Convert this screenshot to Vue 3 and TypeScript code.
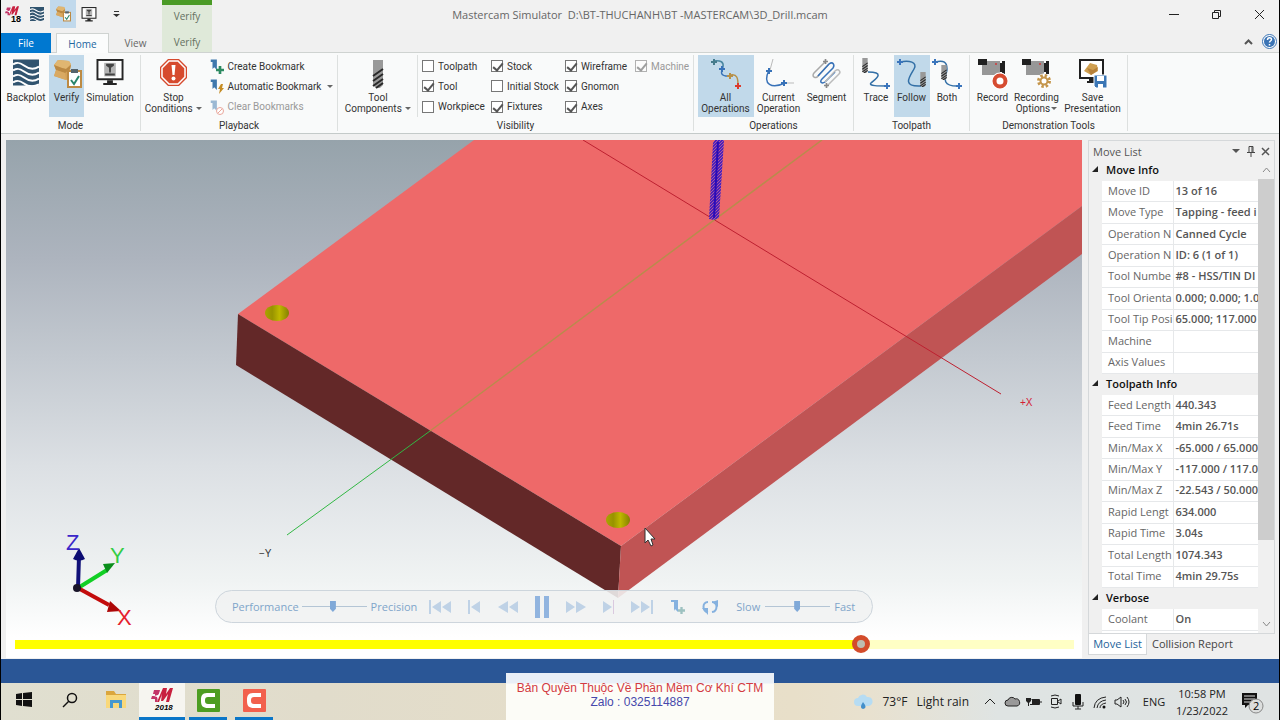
<script setup lang="ts">
import { computed, ref } from 'vue'

interface Check { label: string; on: boolean; disabled?: boolean }
interface Section { title: string; rows: [string, string][]; clipped?: boolean }

const checkColumns = ref<Check[][]>([
  [{ label: 'Toolpath', on: false }, { label: 'Tool', on: true }, { label: 'Workpiece', on: false }],
  [{ label: 'Stock', on: true }, { label: 'Initial Stock', on: false }, { label: 'Fixtures', on: true }],
  [{ label: 'Wireframe', on: true }, { label: 'Gnomon', on: true }, { label: 'Axes', on: true }],
  [{ label: 'Machine', on: true, disabled: true }],
])

const sections: Section[] = [
  {
    title: 'Move Info',
    rows: [
      ['Move ID', '13 of 16'],
      ['Move Type', 'Tapping - feed i'],
      ['Operation N', 'Canned Cycle'],
      ['Operation N', 'ID: 6 (1 of 1)'],
      ['Tool Numbe', '#8 - HSS/TIN DI'],
      ['Tool Orienta', '0.000; 0.000; 1.0'],
      ['Tool Tip Posi', '65.000; 117.000'],
      ['Machine', ''],
      ['Axis Values', ''],
    ],
  },
  {
    title: 'Toolpath Info',
    rows: [
      ['Feed Length', '440.343'],
      ['Feed Time', '4min 26.71s'],
      ['Min/Max X', '-65.000 / 65.000'],
      ['Min/Max Y', '-117.000 / 117.0'],
      ['Min/Max Z', '-22.543 / 50.000'],
      ['Rapid Lengt', '634.000'],
      ['Rapid Time', '3.04s'],
      ['Total Length', '1074.343'],
      ['Total Time', '4min 29.75s'],
    ],
  },
  { title: 'Verbose', clipped: true, rows: [['Coolant', 'On']] },
]

const quality = ref(48)
const speed = ref(49)
const progress = ref(804)
const progressFill = computed(() => `${progress.value / 10}%`)
</script>

<template>
  <div class="screen">
    <svg class="defs" aria-hidden="true">
      <symbol id="waves" viewBox="0 0 26 26">
        <rect width="26" height="26" fill="#31546f" />
        <g fill="none" stroke="#fff" stroke-width="2">
          <path d="M0 5c4-3 7-2 11 1s9 5 15 1" />
          <path d="M0 11c4-3 7-2 11 1s9 5 15 1" />
          <path d="M0 17c4-3 7-2 11 1s9 5 15 1" />
          <path d="M0 23c4-3 7-2 11 1s9 4 15 1" />
        </g>
      </symbol>
      <symbol id="verify" viewBox="0 0 30 30">
        <path d="M2 6l4-5 11 1 2 4-1 5 2 2v6l-6 2L2 17l2-6z" fill="#d3a158" />
        <path d="M2 6l4-5 11 1 2 3-5 5-4-1z" fill="#e0b671" />
        <path d="M2 6l8 3 4 1 5-4-1 4-5 4-9-3z" fill="#bb8943" />
        <path d="M2 17l2-6 9 3 1 7z" fill="#d9a962" />
        <rect x="16" y="12" width="13" height="16" fill="#fff" stroke="#bd8a43" stroke-width="2" />
        <path d="M19 10h7v4h-7z" fill="#56646c" />
        <path d="M19 21l3 4 5-8" fill="none" stroke="#28856b" stroke-width="2" />
      </symbol>
      <symbol id="monitor" viewBox="0 0 30 28">
        <rect x="2" y="1" width="26" height="20" fill="#fff" stroke="#252525" stroke-width="2" />
        <path d="M12 22h6v3h4v2H8v-2h4z" fill="#252525" />
        <rect x="9" y="4" width="12" height="14" fill="#b5b5b5" />
        <path d="M11 5h8v2l-3 2v4l-1 2-1-2V9l-3-2zM10 15h10v2H10z" fill="#444" />
      </symbol>
      <symbol id="bookmark" viewBox="0 0 16 16">
        <path d="M2 1h7v12L6 10 4 12V4H2z" fill="#3f78ad" />
      </symbol>
      <symbol id="plus" viewBox="0 0 6 6">
        <path d="M3 0v6M0 3h6" stroke="currentColor" stroke-width="2" />
      </symbol>
      <symbol id="cutter" viewBox="0 0 12 28">
        <path d="M1 0h10v25l-3 3H4l-3-3z" fill="#999" />
        <path d="M1 16l10-7M1 21l10-7M1 26l10-7M4 28l7-5" stroke="#292929" stroke-width="2" />
      </symbol>
      <symbol id="camera" viewBox="0 0 28 28">
        <path d="M0 0h9v6H0z" fill="#202020" />
        <path d="M4 2h18v14H4z" fill="#979797" />
        <path d="M0 0h9v6H0z" fill="#202020" />
        <path d="M22 4h2V2h3v13h-3v-2h-2z" fill="#202020" />
        <circle cx="18" cy="5" r="1" fill="#d03838" />
      </symbol>
      <symbol id="mastercam" viewBox="0 0 22 15">
        <path d="M3 2h6L8 6l3 2-4 2-1 4H4v-3H0l1-3h3V6H2z" fill="#c23468" />
        <path d="M3 8l4-1 2-3v3l2 1-3 1-1 3-1-3z" fill="#fff" />
        <path d="M12 0h4l-1 6 4-6h3l-4 14h-3l2-8-5 7h-2l1-7-3 8H6z" fill="#c8203f" />
      </symbol>
    </svg>

    <header class="titlebar">
      <div class="title-left">
        <span class="app-mark"><svg viewBox="0 0 16 18"><use href="#mastercam" x="0" y="0" width="14" height="10" /><text x="6" y="16" class="mark-text">18</text></svg></span>
        <button class="quick" aria-label="Backplot"><svg width="14" height="14"><use href="#waves" /></svg></button>
        <button class="quick quick-on" aria-label="Verify"><svg width="16" height="16"><use href="#verify" /></svg></button>
        <button class="quick" aria-label="Simulation"><svg width="16" height="15"><use href="#monitor" /></svg></button>
        <button class="quick quick-more" aria-label="Customize"><svg width="7" height="6" viewBox="0 0 7 6"><path d="M1 0h5v1H1zM0 3h7L3.500 6z" fill="#333" /></svg></button>
        <span class="context-title">Verify</span>
      </div>
      <h1>Mastercam Simulator&nbsp; D:\BT-THUCHANH\BT -MASTERCAM\3D_Drill.mcam</h1>
      <div class="window-controls">
        <button aria-label="Minimize"><svg width="10" height="10"><path d="M0 5.500h10" /></svg></button>
        <button aria-label="Restore"><svg width="11" height="11"><path d="M1.500 3.500h6v6h-6zM3.500 3V1.500h6v6H8" /></svg></button>
        <button aria-label="Close"><svg width="11" height="11"><path d="M1 1l9 9M10 1l-9 9" /></svg></button>
      </div>
    </header>

    <nav class="tabs">
      <button class="tab file">File</button>
      <button class="tab home">Home</button>
      <button class="tab view">View</button>
      <button class="tab context">Verify</button>
      <span class="spacer"></span>
      <button class="help" aria-label="Collapse ribbon"><svg width="9" height="6"><path d="M1 5l3.500-3.500L8 5" fill="none" stroke="#555" stroke-width="2" /></svg></button>
      <button class="help" aria-label="Help">
        <svg width="15" height="15" viewBox="0 0 15 15"><circle cx="7.500" cy="7.500" r="7" fill="#fff" stroke="#3b74b5" /><circle cx="7.500" cy="7.500" r="5.500" fill="#3b74b5" /><path d="M5.500 6c0-3 4-3 4-.5 0 1.500-2 1.500-2 3M7.500 10v1.500" fill="none" stroke="#fff" stroke-width="1.500" /></svg>
      </button>
    </nav>

    <div class="ribbon">
      <section class="group mode">
        <div class="tools">
          <button class="big w46"><svg width="26" height="26"><use href="#waves" /></svg><span>Backplot</span></button>
          <button class="big w35 on"><svg width="30" height="30"><use href="#verify" /></svg><span>Verify</span></button>
          <button class="big w52"><svg width="30" height="28"><use href="#monitor" /></svg><span>Simulation</span></button>
        </div>
        <h2>Mode</h2>
      </section>

      <section class="group playback">
        <div class="tools">
          <button class="big w60">
            <svg width="27" height="27" viewBox="0 0 27 27">
              <path d="M8 0h11l8 8v11l-8 8H8l-8-8V8z" fill="#d64a2e" />
              <path d="M9 2h9l7 7v9l-7 7H9l-7-7V9z" fill="none" stroke="#fff" stroke-width="1.500" />
              <path d="M11.500 6h4l-1 10h-2z" fill="#fff" /><circle cx="13.500" cy="19.500" r="2" fill="#fff" />
            </svg>
            <span>Stop<br />Conditions <i class="caret"></i></span>
          </button>
          <div class="small-list">
            <button class="small"><svg width="16" height="16"><use href="#bookmark" width="14" height="15" /><use href="#plus" x="7" y="8" width="8" height="8" color="#2d8a61" /></svg>Create Bookmark</button>
            <button class="small"><svg width="16" height="16"><use href="#bookmark" width="14" height="15" /><path d="M12 6l-3 5h2l-1 5 5-6h-2l1-4z" fill="#c58c24" /></svg>Automatic Bookmark <i class="caret push"></i></button>
            <button class="small" disabled><svg width="16" height="16"><g opacity=".5"><use href="#bookmark" width="14" height="15" /></g><circle cx="11" cy="12" r="3.500" fill="#fff" stroke="#e9a79c" /><path d="M9 14l4-4" stroke="#e9a79c" /></svg>Clear Bookmarks</button>
          </div>
        </div>
        <h2>Playback</h2>
      </section>

      <section class="group visibility">
        <div class="tools">
          <button class="big w66"><svg width="12" height="28"><use href="#cutter" /></svg><span>Tool<br />Components <i class="caret"></i></span></button>
          <div class="checks">
            <div v-for="(column, i) in checkColumns" :key="i" class="check-column">
              <label v-for="item in column" :key="item.label" :class="{ dim: item.disabled }">
                <input v-model="item.on" type="checkbox" :disabled="item.disabled" />{{ item.label }}
              </label>
            </div>
          </div>
        </div>
        <h2>Visibility</h2>
      </section>

      <section class="group operations">
        <div class="tools">
          <button class="big w56 on">
            <svg width="30" height="30" viewBox="0 0 30 30">
              <g fill="none" stroke-width="1.500"><path d="M2 2c8-1 11 1 10 6" stroke="#4a87a0" /><path d="M12 8c-2 5-4 10 8 9" stroke="#3872b8" /><path d="M20 16c6-1 7 3 7 10" stroke="#b79048" /></g>
              <use href="#plus" width="6" height="6" y="0" color="#457b8c" /><use href="#plus" x="8" y="7" width="6" height="6" color="#3872b8" /><use href="#plus" x="16" y="14" width="6" height="6" color="#b79048" /><use href="#plus" x="24" y="24" width="6" height="6" color="#db3b2d" />
            </svg><span>All<br />Operations</span>
          </button>
          <button class="big w50">
            <svg width="30" height="30" viewBox="0 0 30 30">
              <path d="M9 0L6 11M20 24h10" stroke="#bbb" /><path d="M5 11C-2 26 8 30 21 24" fill="none" stroke="#3872b8" stroke-width="1.500" />
              <use href="#plus" x="2" y="9" width="6" height="6" color="#3872b8" /><use href="#plus" x="17" y="21" width="6" height="6" color="#3872b8" />
            </svg><span>Current<br />Operation</span>
          </button>
          <button class="big w46">
            <svg width="30" height="30" viewBox="0 0 30 30">
              <g fill="none" stroke-width="1.500"><path d="M13 3L2 14c-3 4 2 6 4 3L17 5" stroke="#aaa" /><path d="M6 17L17 5c4-3 6 1 4 4L10 20c-3 3 0 5 3 3L23 13" stroke="#3872b8" /><path d="M13 23l10-11c4-3 6 1 4 3L15 27" stroke="#bbb" /></g>
              <use href="#plus" x="11" y="0" width="5" height="5" color="#888" /><use href="#plus" x="12" y="24" width="5" height="5" color="#888" />
            </svg><span>Segment</span>
          </button>
        </div>
        <h2>Operations</h2>
      </section>

      <section class="group toolpath">
        <div class="tools">
          <button class="big w35">
            <svg width="30" height="30" viewBox="0 0 30 30"><use href="#cutter" x="0" y="-1" width="8" height="15" /><path d="M7 13c19 0 6 8 3 11s8 3 16 3" fill="none" stroke="#326fa6" stroke-width="1.500" /><use href="#plus" x="23" y="24" width="6" height="6" color="#3b75bc" /></svg><span>Trace</span>
          </button>
          <button class="big w36 on">
            <svg width="30" height="30" viewBox="0 0 30 30"><path d="M3 3c9-2 18 0 14 7S4 28 24 27" fill="none" stroke="#326fa6" stroke-width="1.500" /><use href="#plus" x="0" y="0" width="6" height="6" color="#3b75bc" /><use href="#cutter" x="22" y="13" width="8" height="15" /></svg><span>Follow</span>
          </button>
          <button class="big w35">
            <svg width="30" height="30" viewBox="0 0 30 30"><path d="M3 3c9-2 12 0 12 7 0 6-8 17 10 17" fill="none" stroke="#326fa6" stroke-width="1.500" /><use href="#plus" x="0" y="0" width="6" height="6" color="#3b75bc" /><use href="#cutter" x="8" y="6" width="8" height="15" /><use href="#plus" x="24" y="24" width="6" height="6" color="#3b75bc" /></svg><span>Both</span>
          </button>
        </div>
        <h2>Toolpath</h2>
      </section>

      <section class="group demo">
        <div class="tools">
          <button class="big w36">
            <svg width="30" height="30" viewBox="0 0 30 30"><use href="#camera" width="28" height="28" /><circle cx="22" cy="22" r="8.500" fill="#fff" /><circle cx="22" cy="22" r="5.500" fill="#fff" stroke="#d64c31" stroke-width="4" /></svg><span>Record</span>
          </button>
          <button class="big w52">
            <svg width="30" height="30" viewBox="0 0 30 30"><use href="#camera" width="28" height="28" /><circle cx="22" cy="22" r="7.500" fill="#fff" /><circle cx="22" cy="22" r="5.500" fill="none" stroke="#c4954b" stroke-width="3" stroke-dasharray="2.400 1.920" /><circle cx="22" cy="22" r="3.500" fill="#fff" stroke="#c4954b" stroke-width="2" /></svg><span>Recording<br />Options<i class="caret"></i></span>
          </button>
          <button class="big w60">
            <svg width="30" height="30" viewBox="0 0 30 30">
              <rect x="2" y="1" width="23" height="18" fill="#fff" stroke="#202020" stroke-width="2" /><path d="M11 20h5v4H9v-2h2z" fill="#202020" />
              <path d="M6 12l6-8 7 2 1 6-7 4z" fill="#cf9f50" /><path d="M9 9l6 2 5-3-1 4-6 4z" fill="#b78139" />
              <path d="M16 16h13v13H18l-2-2z" fill="#3b76b5" stroke="#fff" /><path d="M19 17h7v5h-7zM20 25h5v4h-5z" fill="#fff" />
            </svg><span>Save<br />Presentation</span>
          </button>
        </div>
        <h2>Demonstration Tools</h2>
      </section>
    </div>

    <main class="workspace">
      <div class="viewport">
        <svg class="scene" viewBox="6 140 1076 518" preserveAspectRatio="xMidYMid slice" role="img" aria-label="Stock model">
          <defs>
            <linearGradient id="hole"><stop offset="0" stop-color="#aaa400" /><stop offset=".3" stop-color="#989300" /><stop offset=".6" stop-color="#beb800" /><stop offset="1" stop-color="#858000" /></linearGradient>
            <pattern id="thread" width="3" height="3" patternUnits="userSpaceOnUse"><rect width="3" height="3" fill="#4a22bb" /><path d="M0 3l3-3" stroke="#ab55a0" stroke-width="1" /></pattern>
          </defs>
          <path d="M238 314L474 140h608v66L621 546z" fill="#ee6969" />
          <path d="M238 314l383 232-3 52-382-233z" fill="#632828" />
          <path d="M621 546l461-340v48L618 598z" fill="#c05454" />
          <path d="M583 140l418 254" stroke="#bd2030" />
          <path d="M822 140L430 431" stroke="#b98b4c" stroke-width="1.500" />
          <path d="M430 431L287 535" stroke="#32b744" />
          <path d="M713 143l2-3h9l-5 78-5 2-5-1z" fill="url(#thread)" />
          <path d="M718 142l-4 76" stroke="#2a0bb7" stroke-width="2" />
          <ellipse cx="277" cy="313" rx="12" ry="8" fill="url(#hole)" />
          <ellipse cx="618" cy="520" rx="12" ry="8" fill="url(#hole)" />
          <text x="1020" y="406" class="axis-label" fill="#d41d34">+X</text>
          <text x="259" y="557" class="axis-label" fill="#333">−Y</text>
          <g stroke-width="4">
            <path d="M78 588l29-18" stroke="#12cf25" /><path d="M103 564l12-1-8 10z" fill="#0a8e1b" />
            <path d="M78 588l31 17" stroke="#c30c0c" /><path d="M110 601l11 10-14 1z" fill="#ad0808" />
            <path d="M78 588l1-32" stroke="#101078" /><path d="M73 559l6-11 6 11q-6 3-12 0z" fill="#0c0c73" />
          </g>
          <circle cx="77" cy="588" r="4" fill="#181428" />
          <text x="66" y="550" class="gnomon" fill="#3b27c9">Z</text>
          <text x="110" y="563" class="gnomon" fill="#34cd45">Y</text>
          <text x="117" y="625" class="gnomon" fill="#e5202c">X</text>
          <path d="M645 528v15l3-3 3 6 2-1-2-6h4z" fill="#fff" stroke="#333" />
        </svg>

        <div class="player">
          <label for="quality">Performance</label>
          <input id="quality" v-model="quality" class="mini" type="range" />
          <span class="precision">Precision</span>
          <button class="p34" aria-label="First"><svg width="24" height="14"><path d="M1 0h2v14H1zM13 1v12L4 7zM23 1v12l-9-6z" /></svg></button>
          <button class="p34" aria-label="Step back"><svg width="13" height="14"><path d="M0 0h2v14H0zM12 1v12L3 7z" /></svg></button>
          <button class="p34" aria-label="Rewind"><svg width="20" height="14"><path d="M10 1v12L0 7zM20 1v12l-9-6z" /></svg></button>
          <button class="p34 pause" aria-label="Pause"><svg width="14" height="22"><path d="M0 0h5v22H0zM9 0h5v22H9z" /></svg></button>
          <button class="p34" aria-label="Fast forward"><svg width="20" height="14"><path d="M0 1v12l9-6zM10 1v12l10-6z" /></svg></button>
          <button class="p30" aria-label="Step forward"><svg width="13" height="14"><path d="M1 1v12l9-6z" /><path d="M11 0h1v14h-1z" fill="#dac9df" /></svg></button>
          <button class="p38" aria-label="Last"><svg width="24" height="14"><path d="M1 1v12l9-6zM11 1v12l9-6zM21 0h2v14h-2z" /></svg></button>
          <button class="p34" aria-label="Bookmark"><svg width="16" height="16"><path d="M1 1h7v12l-3-3-1 2V3H1z" fill="#85b1df" /><use href="#plus" x="8" y="8" width="7" height="7" color="#9dc1c0" /></svg></button>
          <button class="p30" aria-label="Loop"><svg width="16" height="16"><path d="M6 13C0 12 0 3 6 3M10 3c6 0 6 9 0 10" fill="none" stroke="#85b1df" stroke-width="2" /><path d="M16 1v7l-6-5zM0 9l6 0 0 7z" fill="#85b1df" /></svg></button>
          <label for="speed" class="slow">Slow</label>
          <input id="speed" v-model="speed" class="mini" type="range" />
          <span>Fast</span>
        </div>
        <input v-model="progress" class="timeline" type="range" min="0" max="1000" aria-label="Progress" :style="{ '--fill': progressFill }" />
      </div>

      <aside class="panel">
        <div class="panel-box">
          <div class="panel-head">
            <h2>Move List</h2>
            <button aria-label="Menu"><i class="caret wide"></i></button>
            <button aria-label="Pin"><svg width="8" height="11"><path d="M2 .5h4v6H2zM5 1v5M0 6.500h8M4 7v4" fill="none" stroke="#444" /></svg></button>
            <button aria-label="Close"><svg width="9" height="9"><path d="M1 1l7 7M8 1L1 8" stroke="#555" stroke-width="1.500" /></svg></button>
          </div>
          <div class="panel-body">
            <div class="sections">
              <section v-for="s in sections" :key="s.title">
                <h3><svg width="7" height="7"><path d="M6 0v6H0z" fill="#222" /></svg>{{ s.title }}</h3>
                <table :class="{ short: s.clipped }">
                  <tbody>
                    <tr v-for="(r, i) in s.rows" :key="i"><th scope="row">{{ r[0] }}</th><td>{{ r[1] }}</td></tr>
                  </tbody>
                </table>
              </section>
              <div class="rest"></div>
            </div>
            <div class="scroll">
              <button aria-label="Scroll up"><svg width="9" height="6"><path d="M1 5l3.500-4L8 5" /></svg></button>
              <div class="track"><div class="thumb"></div></div>
              <button aria-label="Scroll down"><svg width="9" height="6"><path d="M1 1l3.500 4L8 1" /></svg></button>
            </div>
          </div>
        </div>
        <div class="panel-tabs"><button class="active">Move List</button><button>Collision Report</button></div>
      </aside>
    </main>

    <div class="statusbar"></div>

    <footer class="taskbar">
      <button class="task" aria-label="Start"><svg width="16" height="16"><path d="M0 2l6-1v6H0zM7 1l9-1v7H7zM0 8h6v6l-6-1zM7 8h9v7l-9-1z" fill="#111" /></svg></button>
      <button class="task" aria-label="Search"><svg width="16" height="16"><path d="M7 9l-6 6" stroke="#111" stroke-width="1.500" /><circle cx="10" cy="6" r="4.500" fill="none" stroke="#111" stroke-width="1.500" /></svg></button>
      <button class="task" aria-label="File Explorer"><svg width="20" height="18"><path d="M0 0h8l2 3h10v14H0z" fill="#dba63d" /><path d="M0 4h20v13H0z" fill="#f9d87a" /><path d="M4 17V9h12v8h-3v-5H7v5z" fill="#4598d0" /></svg></button>
      <button class="task current" aria-label="Mastercam 2018"><svg width="22" height="24"><use href="#mastercam" width="22" height="15" /><text x="4" y="22" class="year">2018</text></svg></button>
      <button class="task running" aria-label="Camtasia"><svg width="23" height="23"><rect width="23" height="23" rx="1" fill="#4d9d22" /><path d="M18 4h-8c-5 0-6 3-6 7v1c0 5 2 7 7 7h7v-4h-7c-2 0-3-1-3-3v-1c0-2 1-3 3-3h7z" fill="#fff" /></svg></button>
      <button class="task running" aria-label="Camtasia Recorder"><svg width="23" height="23"><rect width="23" height="23" rx="1" fill="#f2604d" /><path d="M18 4h-8c-5 0-6 3-6 7v1c0 5 2 7 7 7h7v-4h-7c-2 0-3-1-3-3v-1c0-2 1-3 3-3h7z" fill="#fff" /></svg></button>
      <span class="spacer"></span>
      <button class="weather"><svg width="20" height="16"><path d="M5 12a4 4 0 0 1 0-8 5 5 0 0 1 9-1 4 4 0 0 1 2 9z" fill="#b6dcf3" /><path d="M10 8q5 6 0 7-4-1 0-7z" fill="#438fca" /></svg><span>73°F</span><span>Light rain</span></button>
      <div class="tray">
        <button aria-label="Hidden icons"><svg width="12" height="8"><path d="M1 6l5-5 5 5" /></svg></button>
        <button class="cloud" aria-label="OneDrive"><svg width="16" height="12"><path d="M4 10a3 3 0 0 1 0-6 4 4 0 0 1 7-1 3.500 3.500 0 0 1 2 7z" /></svg></button>
        <button aria-label="Battery"><svg width="16" height="12"><path d="M5.500 3.500h8v5H4M15 5v2" /><path class="solid" d="M6 4h7v4H6zM0 2h5v3L3 7v3H2V7L0 5z" /></svg></button>
        <button aria-label="Meet now"><svg width="12" height="15"><path d="M1.500 4.500h6v6h-6zM8 7l3-2v5L8 8M1 2q4-2 8 0M1 13q4 2 8 0" /></svg></button>
        <button aria-label="Microphone"><svg width="12" height="16"><rect x="3" y="0" width="6" height="11" rx="1" fill="#111" /><path d="M1 8v4h10V8M6 12v3M3 15h6" /></svg></button>
        <button aria-label="Network"><svg width="14" height="14"><path d="M1 13Q2 3 13 2M4 13q1-7 9-8M7 13q0-4 6-5" /><circle cx="11" cy="12" r="1.500" fill="#111" /></svg></button>
        <button aria-label="Volume"><svg width="16" height="12"><path d="M1 4h2l4-3v10L3 8H1zM9 4q2 2 0 4M11 3q3 3 0 6" /><path d="M13 1q4 5 0 10" /></svg></button>
      </div>
      <button class="lang">ENG</button>
      <button class="clock"><span>10:58 PM</span><span>1/23/2022</span></button>
      <button class="notify" aria-label="2 notifications"><svg width="26" height="26"><path d="M1 4h15v12H7l-3 3v-3H1z" fill="#111" /><path d="M3 7h11M3 10h11M3 13h7" stroke="#ddd" /><circle cx="15" cy="17" r="7" fill="#dcdedd" stroke="#888" /><text x="12" y="21" class="count">2</text></svg></button>
    </footer>

    <div class="credit"><strong>Bản Quyền Thuộc Về Phần Mềm Cơ Khí CTM</strong><span>Zalo : 0325114887</span></div>
  </div>
</template>

<style>
body { background: #000; }
</style>

<style scoped>
.screen { position: relative; box-sizing: border-box; display: flex; flex-direction: column; height: 100vh; overflow: hidden; border: solid #000; border-width: 0 1px; background: #f0f0f0; color: #333; font: 10px/11px "Open Sans", "Noto Sans", sans-serif; }
.screen * { box-sizing: border-box; }
.defs { position: absolute; width: 0; height: 0; }
svg { display: block; flex: none; overflow: visible; }
button { padding: 0; border: 0; background: none; color: inherit; font: inherit; }
h1, h2, h3 { margin: 0; font: inherit; }
.spacer { flex: 1; }
.caret { display: inline-block; margin-left: 1px; border: solid transparent; border-width: 3px 3px 0; border-top-color: #666; vertical-align: 2px; }
.caret.push { margin-left: 3px; }
.caret.wide { border-width: 4px 4px 0; border-top-color: #555; }

.titlebar { display: grid; grid-template-columns: 1fr auto 1fr; height: 30px; background: #f1f1f1; }
.title-left { display: flex; }
.app-mark { width: 23px; padding: 6px 0 0 4px; }
.app-mark svg { width: 16px; height: 18px; }
.mark-text { font: bold 9px "Liberation Sans", sans-serif; }
.quick { display: grid; place-items: center; width: 26px; height: 28px; }
.quick-on { background: #c1d9ec; }
.quick-more { width: 29px; }
.context-title { width: 50px; margin-left: 31px; padding-top: 6px; border-top: 5px solid #4a9b25; background: #dfe9d9; color: #64705f; text-align: center; }
h1 { color: #666; font-size: 11px; line-height: 29px; }
.window-controls { display: flex; justify-content: flex-end; margin-right: -2px; }
.window-controls button { display: grid; place-items: center; width: 43px; height: 28px; }
.window-controls path { fill: none; stroke: #222; }

.tabs { display: flex; height: 23px; border-bottom: 1px solid #cfd3d1; }
.tab { height: 20px; margin-top: 3px; color: #666; text-align: center; }
.file { width: 50px; background: #0078d0; color: #fff; }
.home { width: 53px; height: 21px; margin-left: 5px; border: 1px solid #cfd3d1; border-bottom: 0; background: #fbfcfc; color: #23669f; }
.view { width: 53px; }
.context { width: 50px; height: 22px; margin-top: 0; padding-top: 3px; background: #dfe9d9; color: #64705f; }
.help { display: grid; place-items: center; width: 21px; padding-top: 1px; }
.tabs .help:last-child { margin-right: -1px; }

.ribbon { display: flex; height: 81px; padding-top: 2px; border-bottom: 1px solid #c4cac9; background: #f9fafa; font-family: Roboto, "Open Sans", sans-serif; }
.group { height: 76px; border-right: 1px solid #dde0df; }
.group h2 { line-height: 18px; text-align: center; }
.tools { display: flex; justify-content: center; height: 62px; }
.mode { width: 140px; }
.mode .tools { justify-content: flex-start; padding-left: 2px; }
.playback { width: 197px; }
.visibility { width: 356px; }
.operations { width: 160px; }
.toolpath { width: 116px; }
.demo { width: 158px; }
.big { display: flex; flex-direction: column; align-items: center; height: 62px; padding-top: 4px; white-space: nowrap; }
.big svg { height: 30px; overflow: visible; }
.mode .big:first-child svg, .mode .big:last-child svg, .playback .big svg { height: 27px; margin-bottom: 3px; }
.big span { margin-top: 3px; }
.on { background: #c1d9ea; }
.w35 { width: 35px; } .w36 { width: 36px; } .w46 { width: 46px; } .w50 { width: 50px; } .w52 { width: 52px; } .w56 { width: 56px; } .w60 { width: 60px; } .w66 { width: 66px; }
.small-list, .check-column { display: grid; grid-template-rows: repeat(3, 1fr); padding-top: 1px; }
.small { display: flex; align-items: center; gap: 3px; text-align: left; white-space: nowrap; }
.small-list { width: 126px; margin-left: 5px; }
.small:disabled, .dim { color: #999; }
.checks { display: grid; grid-template-columns: 69px 74px 70px 58px; margin-left: 6px; padding-left: 4px; border-left: 1px solid #dde0df; }
.visibility .tools { justify-content: flex-start; padding-left: 7px; }
label { display: flex; align-items: center; white-space: nowrap; }
input[type='checkbox'] { appearance: none; position: relative; width: 12px; height: 12px; margin: 0 4px 0 0; border: 1px solid #777; background: #fff; }
input[type='checkbox']:checked::after { content: ''; position: absolute; left: 3px; top: 0; width: 4px; height: 8px; border: solid #555; border-width: 0 2px 2px 0; transform: rotate(40deg); }
.dim input { opacity: .55; }

.workspace { display: flex; flex: 1; min-height: 0; padding: 6px 4px 0 5px; }
.viewport { position: relative; flex: 1; min-width: 0; overflow: hidden; background: linear-gradient(#96a3ab, #adb4be 23%, #c3c9d0 42%, #dce0e4 63%, #f0f3f3 85%, #fff 96%); }
.scene { position: absolute; width: 100%; height: 100%; }
.axis-label { font: 10px "Liberation Sans", sans-serif; }
.gnomon { font: 22px "Liberation Sans", sans-serif; }
.player { position: absolute; bottom: 35px; left: 50%; display: flex; align-items: center; width: 658px; height: 33px; padding: 0 16px; border: 1px solid #cdd5dc; border-radius: 17px; background: rgb(240 241 241 / 88%); color: #7fa5ca; font-size: 11px; transform: translateX(-50%); }
.player button { display: grid; place-items: center; }
.player svg { fill: #bfd2e6; }
.precision { margin-right: 6px; }
.mini { appearance: none; width: 65px; height: 14px; margin: 0 4px 0 3px; background: linear-gradient(#b4c5d5, #b4c5d5) center / 100% 1px no-repeat; }
.mini::-webkit-slider-thumb { appearance: none; width: 6px; height: 11px; background: #80a9d8; clip-path: polygon(0 0, 100% 0, 100% 70%, 50% 100%, 0 70%); }
.p30 { width: 30px; } .p34 { width: 34px; } .p38 { width: 38px; }
.pause svg { fill: #91b4df; }
.slow { margin: 0 2px 0 11px; }
.timeline { appearance: none; position: absolute; right: 8px; bottom: 5px; left: 9px; height: 18px; margin: 0; background: linear-gradient(90deg, #ff0 var(--fill), #ffffc5 var(--fill)) center / 100% 9px no-repeat; }
.timeline::-webkit-slider-thumb { appearance: none; width: 18px; height: 18px; border: 5px solid #d34c2b; border-radius: 50%; background: #bdbdb0; }

.panel { display: flex; flex-direction: column; width: 187px; margin-left: 6px; padding-bottom: 3px; font-size: 11px; }
.panel-box { display: flex; flex: 1; flex-direction: column; min-height: 0; border: 1px solid #d5d8da; }
.panel-head { display: flex; align-items: center; height: 19px; padding: 0 1px 0 4px; line-height: 19px; }
.panel-head h2 { flex: 1; padding-top: 2px; color: #555; }
.panel-head button { display: grid; place-items: center; width: 15px; height: 20px; padding-top: 1px; }
.panel-body { display: flex; flex: 1; min-height: 0; }
.sections { display: flex; flex: 1; flex-direction: column; min-width: 0; overflow: hidden; }
h3 { display: flex; align-items: center; gap: 7px; height: 21px; padding: 0 0 2px 3px; color: #111; font-weight: 600; }
table { width: calc(100% - 13px); height: 193px; margin-left: 13px; border-collapse: collapse; table-layout: fixed; background: #fff; }
table.short { height: 22px; }
.rest { flex: 1; margin-left: 13px; background: #fff; }
th, td { padding: 0 0 2px 6px; overflow: hidden; border-bottom: 1px solid #e6e8ea; color: #666; line-height: 15px; text-align: left; white-space: nowrap; }
th { width: 71px; border-right: 1px solid #e6e8ea; font-weight: 400; }
td { padding-left: 2px; color: #555; font-weight: 600; }
.scroll { display: flex; flex-direction: column; width: 16px; }
.scroll button { display: grid; place-items: center; height: 19px; }
.scroll path { fill: none; stroke: #888; }
.track { flex: 1; }
.thumb { height: 83%; background: #cdcdcd; }
.panel-tabs { display: flex; height: 21px; }
.panel-tabs button { padding: 0 5px 3px; color: #444; white-space: nowrap; }
.panel-tabs .active { width: 59px; padding: 0 0 2px; border: solid #d5d8da; border-width: 0 1px 1px; background: #fff; color: #24639b; }

.statusbar { height: 24px; margin-top: 1px; background: #2a5696; }
.taskbar { display: flex; align-items: center; height: 37px; background: linear-gradient(90deg, #e0dfd0, #e1dccb 25%, #e8dfc9 62%, #e8e1cf 68%, #dfe4e3 78%, #dfe3e3); color: #222; font-size: 12px; }
.task { display: grid; place-items: center; width: 46px; height: 37px; border-bottom: 3px solid transparent; }
.task.current { background: #f6f5f0; }
.task.current, .task.running { border-color: #0b76c8; }
.task.running { width: 38px; margin: 0 4px; }
.year { font: italic bold 8px "Liberation Sans", sans-serif; }
.weather { display: flex; align-items: center; gap: 9px; margin-right: 10px; }
.tray { display: flex; }
.tray button { display: grid; place-items: center; width: 22px; height: 30px; }
.tray path { fill: none; stroke: #222; }
.tray .cloud path { fill: #999; }
.tray .solid { fill: #222; stroke: none; }
.lang { width: 42px; font-size: 11px; }
.clock { display: flex; flex-direction: column; align-items: center; width: 54px; font-size: 11px; line-height: 17px; }
.notify { display: grid; place-items: center; width: 50px; }
.count { font: 11px "Open Sans", sans-serif; }
.credit { position: absolute; bottom: 0; left: 50%; display: flex; flex-direction: column; align-items: center; width: 268px; height: 47px; padding-top: 8px; background: linear-gradient(#e9eff7 10px, #fcfcf7 11px); color: #4648ab; font: 12px/14px "Liberation Sans", sans-serif; transform: translateX(-50%); }
.credit strong { color: #d33a42; font-weight: 400; white-space: nowrap; }
</style>
